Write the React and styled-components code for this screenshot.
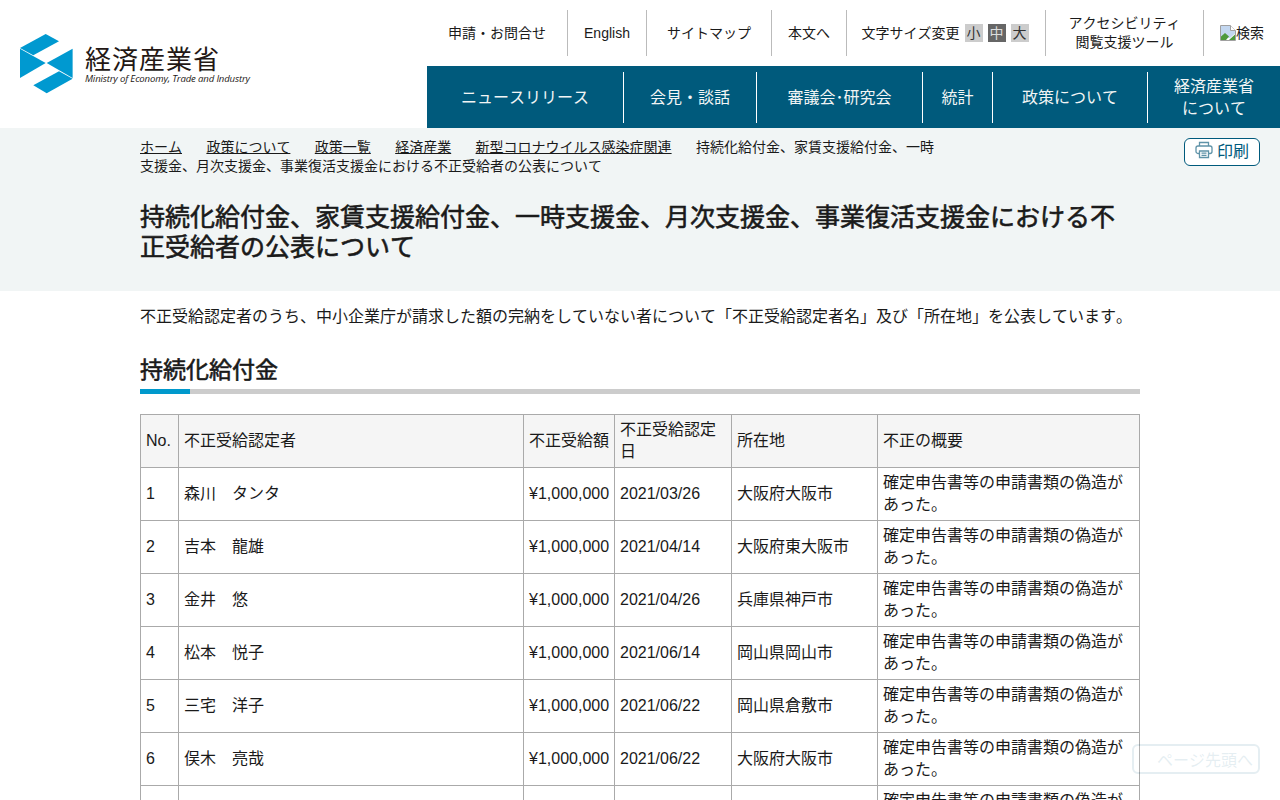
import React from 'react';
import styled, { createGlobalStyle } from 'styled-components';

/* -------------------------  STYLES ------------------------- */

const GlobalStyle = createGlobalStyle`
  html, body {
    margin: 0;
    padding: 0;
    background: #fff;
  }
  body {
    font-family: "Liberation Sans", "Noto Sans CJK JP", sans-serif;
    font-size: 16px;
    font-kerning: none;
    color: #1a1a1a;
  }
  a {
    color: inherit;
  }
`;

const Header = styled.header`
  display: flex;
  justify-content: space-between;
  height: 128px;
`;

const LogoLink = styled.a`
  display: flex;
  align-items: center;
  gap: 12px;
  padding: 0 0 0 20px;
  text-decoration: none;
`;

const LogoText = styled.span`
  display: flex;
  flex-direction: column;
`;

const LogoJa = styled.span`
  font-family: "Noto Sans CJK JP", sans-serif;
  font-size: 26px;
  line-height: 28px;
  letter-spacing: 1px;
  color: #231815;
`;

const LogoEn = styled.span`
  margin-top: 1px;
  font-family: "Open Sans", sans-serif;
  font-style: italic;
  font-size: 9.6px;
  line-height: 12px;
  letter-spacing: -0.16px;
  white-space: nowrap;
  color: #231815;
`;

const HeaderRight = styled.div`
  display: flex;
  flex-direction: column;
  width: 853px;
`;

const UtilityBar = styled.div`
  display: flex;
  height: 46px;
  padding: 10px 0;
`;

const UtilityItem = styled.a`
  display: flex;
  align-items: center;
  justify-content: center;
  box-sizing: border-box;
  width: ${(p) => p.$width}px;
  border-right: ${(p) => (p.$last ? 'none' : '1px solid #bbb')};
  font-size: 14px;
  line-height: 19px;
  text-align: center;
  text-decoration: none;
  color: #1a1a1a;
`;

const TextSizeItem = styled(UtilityItem)`
  padding-right: 2px;
`;

const SizeButton = styled.span`
  display: inline-block;
  width: 18px;
  height: 18px;
  margin-left: 5px;
  line-height: 18px;
  text-align: center;
  background: ${(p) => (p.$active ? '#666' : '#ccc')};
  color: ${(p) => (p.$active ? '#ddd' : '#333')};
`;

const SearchItem = styled(UtilityItem)`
  justify-content: flex-start;
  padding-left: 16px;
  white-space: nowrap;
`;

const MainNav = styled.nav`
  display: flex;
  align-items: center;
  height: 62px;
  background: #005a7c;
`;

const NavItem = styled.a`
  display: flex;
  align-items: center;
  justify-content: center;
  box-sizing: border-box;
  width: ${(p) => p.$width}px;
  height: 51px;
  margin-top: 1px;
  border-right: ${(p) => (p.$last ? 'none' : '1px solid #fff')};
  font-size: 16px;
  line-height: 22px;
  text-align: center;
  text-decoration: none;
  color: #f2f5f5;
`;

const TitleBand = styled.div`
  box-sizing: border-box;
  height: 163px;
  padding: 10px 20px 0 140px;
  background: #f1f5f5;
`;

const BandTop = styled.div`
  display: flex;
  justify-content: space-between;
  align-items: flex-start;
`;

const Breadcrumb = styled.div`
  width: 800px;
  font-size: 14px;
  line-height: 19px;
`;

const Crumb = styled.a`
  margin-right: 24.4px;
  text-decoration: underline;
`;

const PrintButton = styled.a`
  display: flex;
  align-items: center;
  justify-content: center;
  gap: 4px;
  box-sizing: border-box;
  width: 76px;
  height: 28px;
  padding-bottom: 4px;
  background: #fff;
  border: 1px solid #005a7c;
  border-radius: 6px;
  font-size: 16px;
  text-decoration: none;
  color: #005a7c;
`;

const PageTitle = styled.h1`
  width: 990px;
  margin: 26px 0 0;
  font-size: 25px;
  font-weight: 400;
  -webkit-text-stroke: 0.6px #1a1a1a;
  line-height: 30px;
`;

const Main = styled.main`
  width: 1000px;
  margin: 0 auto 0 140px;
`;

const Lead = styled.p`
  margin: 14px 0 0;
  font-size: 16px;
  line-height: 24px;
  white-space: nowrap;
`;

const SectionTitle = styled.h2`
  position: relative;
  margin: 23px 0 20px;
  border-bottom: 5px solid #ccc;
  font-size: 23px;
  font-weight: 400;
  -webkit-text-stroke: 0.6px #1a1a1a;
  line-height: 37px;

  &::after {
    content: '';
    position: absolute;
    left: 0;
    bottom: -5px;
    width: 50px;
    height: 5px;
    background: #0099cc;
  }
`;

const Table = styled.table`
  width: 999px;
  table-layout: fixed;
  border-collapse: collapse;
  font-size: 16px;
  line-height: 22px;
`;

const HeadCell = styled.th`
  height: 52px;
  padding: 4px 5px;
  box-sizing: border-box;
  border: 1px solid #aaa;
  background: #f5f5f5;
  font-weight: 400;
  text-align: left;
  vertical-align: middle;
`;

const Cell = styled.td`
  height: 52px;
  padding: 4px 5px;
  box-sizing: border-box;
  border: 1px solid #aaa;
  vertical-align: middle;
`;

const PageTop = styled.a`
  position: fixed;
  right: 20px;
  bottom: 26px;
  display: flex;
  align-items: center;
  justify-content: flex-end;
  box-sizing: border-box;
  width: 128px;
  height: 30px;
  padding-right: 5px;
  background: #fff;
  border: 2px solid #005a7c;
  border-radius: 6px;
  opacity: 0.1;
  font-size: 16px;
  color: #005a7c;
`;

/* -------------------------  DATA ------------------------- */

const utilityLinks = [
  { label: '申請・お問合せ', width: 141 },
  { label: 'English', width: 79 },
  { label: 'サイトマップ', width: 125 },
  { label: '本文へ', width: 75 },
];

const navLinks = [
  { label: 'ニュースリリース', width: 197 },
  { label: '会見・談話', width: 133 },
  { label: '審議会･研究会', width: 166 },
  { label: '統計', width: 70 },
  { label: '政策について', width: 155 },
];

const crumbs = ['ホーム', '政策について', '政策一覧', '経済産業', '新型コロナウイルス感染症関連'];

const columns = [38, 345, 91, 117, 146, 262];

const reason = '確定申告書等の申請書類の偽造があった。';

const rows = [
  ['1', '森川　タンタ', '2021/03/26', '大阪府大阪市'],
  ['2', '吉本　龍雄', '2021/04/14', '大阪府東大阪市'],
  ['3', '金井　悠', '2021/04/26', '兵庫県神戸市'],
  ['4', '松本　悦子', '2021/06/14', '岡山県岡山市'],
  ['5', '三宅　洋子', '2021/06/22', '岡山県倉敷市'],
  ['6', '俣木　亮哉', '2021/06/22', '大阪府大阪市'],
];

/* -------------------------  ICONS ------------------------- */

const LogoMark = () => (
  <svg width="53" height="60" viewBox="20 34 53 60" aria-hidden="true">
    <g fill="#0099d0">
      <polygon points="20,48 45.7,34 59,41.3 33.3,55.3" />
      <polygon points="20,48.8 45.7,63 20,78" />
      <polygon points="72.6,48.8 72.6,78 46.7,63" />
      <polygon points="33.3,85.3 59,71.3 72.6,78.8 46.7,93.2" />
    </g>
  </svg>
);

const PrinterIcon = () => (
  <svg width="18" height="18" viewBox="0 0 18 18" fill="none" stroke="#5f93a8" strokeWidth="1.3" aria-hidden="true">
    <path d="M4.5 5V1.5h9V5" />
    <rect x="1" y="5" width="16" height="7.5" rx="2" />
    <path d="M4.5 10h9v6.5h-9z" fill="#fff" />
    <path d="M6.5 12.2h5M6.5 14.4h5" />
  </svg>
);

const BrokenImage = () => (
  <svg width="16" height="16" viewBox="0 0 16 16" aria-hidden="true">
    <path d="M.5.5h10l5 5v10H.5z" fill="#fff" stroke="#a0a0a0" />
    <path d="M1 1h9.5v4.5H15v3L10 13H1z" fill="#c3d7f0" />
    <path d="M1 15v-3.5L5 8l4 3.5L6 15z" fill="#4e9a3c" />
    <path d="M10.5.5v5h5" fill="#fff" stroke="#a0a0a0" />
    <path d="M9 15l6-5.5V15z" fill="#4e9a3c" />
  </svg>
);

/* -------------------------  RENDER ------------------------- */

const App = () => (
  <>
    <GlobalStyle />
    <Header>
      <LogoLink>
        <LogoMark />
        <LogoText>
          <LogoJa>経済産業省</LogoJa>
          <LogoEn>Ministry of Economy, Trade and Industry</LogoEn>
        </LogoText>
      </LogoLink>
      <HeaderRight>
        <UtilityBar>
          {utilityLinks.map((link) => (
            <UtilityItem key={link.label} $width={link.width}>{link.label}</UtilityItem>
          ))}
          <TextSizeItem $width={199}>
            文字サイズ変更
            <SizeButton>小</SizeButton>
            <SizeButton $active>中</SizeButton>
            <SizeButton>大</SizeButton>
          </TextSizeItem>
          <UtilityItem $width={158}>
            アクセシビリティ
            <br />
            閲覧支援ツール
          </UtilityItem>
          <SearchItem $width={76} $last>
            <BrokenImage />
            検索
          </SearchItem>
        </UtilityBar>
        <MainNav>
          {navLinks.map((link) => (
            <NavItem key={link.label} $width={link.width}>{link.label}</NavItem>
          ))}
          <NavItem $width={132} $last>
            経済産業省
            <br />
            について
          </NavItem>
        </MainNav>
      </HeaderRight>
    </Header>

    <TitleBand>
      <BandTop>
        <Breadcrumb>
          {crumbs.map((crumb) => (
            <Crumb key={crumb}>{crumb}</Crumb>
          ))}
          持続化給付金、家賃支援給付金、一時支援金、月次支援金、事業復活支援金における不正受給者の公表について
        </Breadcrumb>
        <PrintButton>
          <PrinterIcon />
          印刷
        </PrintButton>
      </BandTop>
      <PageTitle>持続化給付金、家賃支援給付金、一時支援金、月次支援金、事業復活支援金における不正受給者の公表について</PageTitle>
    </TitleBand>

    <Main>
      <Lead>不正受給認定者のうち、中小企業庁が請求した額の完納をしていない者について「不正受給認定者名」及び「所在地」を公表しています。</Lead>
      <SectionTitle>持続化給付金</SectionTitle>
      <Table>
        <colgroup>
          {columns.map((width, i) => (
            <col key={i} width={width} />
          ))}
        </colgroup>
        <thead>
          <tr>
            <HeadCell>No.</HeadCell>
            <HeadCell>不正受給認定者</HeadCell>
            <HeadCell>不正受給額</HeadCell>
            <HeadCell>不正受給認定日</HeadCell>
            <HeadCell>所在地</HeadCell>
            <HeadCell>不正の概要</HeadCell>
          </tr>
        </thead>
        <tbody>
          {rows.map(([no, name, date, place]) => (
            <tr key={no}>
              <Cell>{no}</Cell>
              <Cell>{name}</Cell>
              <Cell>¥1,000,000</Cell>
              <Cell>{date}</Cell>
              <Cell>{place}</Cell>
              <Cell>{reason}</Cell>
            </tr>
          ))}
          <tr>
            <Cell>7</Cell>
            <Cell />
            <Cell>¥1,000,000</Cell>
            <Cell />
            <Cell />
            <Cell>{reason}</Cell>
          </tr>
        </tbody>
      </Table>
    </Main>

    <PageTop>ページ先頭へ</PageTop>
  </>
);

export default App;
